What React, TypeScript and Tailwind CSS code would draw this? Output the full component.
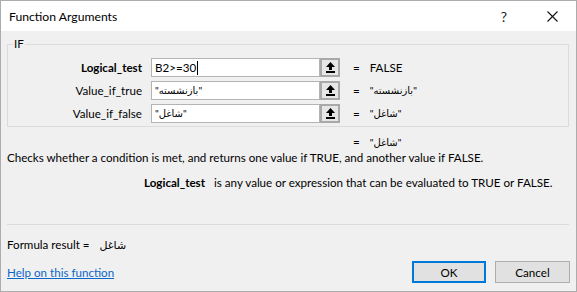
import React from "react";

function UpArrow() {
  return (
    <svg width="9" height="11" viewBox="0 0 9 11" fill="#000">
      <polygon points="4.5,0 9,5 6,5 6,8 3,8 3,5 0,5" />
      <rect x="0" y="9" width="9" height="2" />
    </svg>
  );
}

function ArgRow({
  label,
  value,
  result,
  bold,
  cursor,
  arabic,
}: {
  label: string;
  value: string;
  result: string;
  bold?: boolean;
  cursor?: boolean;
  arabic?: boolean;
}) {
  return (
    <div className="flex h-[19px] items-center">
      <div className={`w-[134px] text-right ${bold ? "font-bold" : ""}`}>{label}</div>
      <div className="ml-[9px] flex h-[19px] w-[169px] items-center border border-[#b4b4b4] bg-white pl-[3px]">
        <span className={arabic ? "text-[10px]" : ""}>{value}</span>
        {cursor && <span className="ml-[1px] inline-block h-[14px] w-[1px] bg-black" />}
      </div>
      <div className="flex h-[19px] w-[20px] items-center justify-center border-2 border-[#a9a9a9] bg-[#e6e6e6]">
        <UpArrow />
      </div>
      <div className="ml-[13px]">=</div>
      <div className={`ml-[10px] ${arabic ? "text-[10px]" : ""}`}>{result}</div>
    </div>
  );
}

export default function App() {
  return (
    <div className="flex h-[292px] w-[577px] flex-col overflow-hidden border border-[#acacac] bg-[#f0f0f0] font-['Lato','DejaVu_Sans',sans-serif] text-[11.6px] leading-[15px] text-black">
      <div className="flex h-[30px] shrink-0 items-center bg-white pl-[8px]">
        <div className="text-[12.2px]">Function Arguments</div>
        <div className="ml-auto mr-[40px] text-[14px] text-[#222]">?</div>
        <svg className="mr-[18px]" width="11" height="11" viewBox="0 0 11 11" stroke="#111" strokeWidth="1.1">
          <line x1="0.5" y1="0.5" x2="10.5" y2="10.5" />
          <line x1="10.5" y1="0.5" x2="0.5" y2="10.5" />
        </svg>
      </div>

      <div className="flex flex-1 flex-col pl-[6px] pr-[7px] pt-[6px]">
        <fieldset className="border border-[#dcdcdc] pb-[3px] pt-[7px]">
          <legend className="ml-[5px] px-[1px] leading-[14px]">IF</legend>
          <div className="flex flex-col gap-[4px]">
            <ArgRow label="Logical_test" value="B2>=30" result="FALSE" bold cursor />
            <ArgRow label="Value_if_true" value={'"بازنشسته"'} result={'"بازنشسته"'} arabic />
            <ArgRow label="Value_if_false" value={'"شاغل"'} result={'"شاغل"'} arabic />
          </div>
        </fieldset>

        <div className="mt-[8px] flex h-[14px] items-center pl-[346px] leading-[14px]">
          <span>=</span>
          <span className="ml-[10px] text-[10px]">{'"شاغل"'}</span>
        </div>
        <div className="mt-[1px] h-[15px] whitespace-nowrap">
          Checks whether a condition is met, and returns one value if TRUE, and another value if FALSE.
        </div>
        <div className="mt-[10px] flex h-[15px] whitespace-nowrap pl-[137px]">
          <span className="font-bold">Logical_test</span>
          <span className="ml-[9px]">is any value or expression that can be evaluated to TRUE or FALSE.</span>
        </div>

        <div className="mt-[34px] h-px bg-[#dcdcdc]" />

        <div className="mt-[12px] flex h-[15px] items-center">
          <span>Formula result =</span>
          <span className="ml-[10px] text-[11px]">شاغل</span>
        </div>

        <div className="mt-[9px] flex items-center">
          <a className="text-[#0b66c9] underline" href="#">
            Help on this function
          </a>
          <button className="ml-auto h-[22px] w-[74px] border-2 border-[#0078d7] bg-[#e1e1e1]">OK</button>
          <button className="ml-[9px] mr-[-1px] h-[22px] w-[75px] border border-[#adadad] bg-[#e1e1e1]">Cancel</button>
        </div>
      </div>
    </div>
  );
}
